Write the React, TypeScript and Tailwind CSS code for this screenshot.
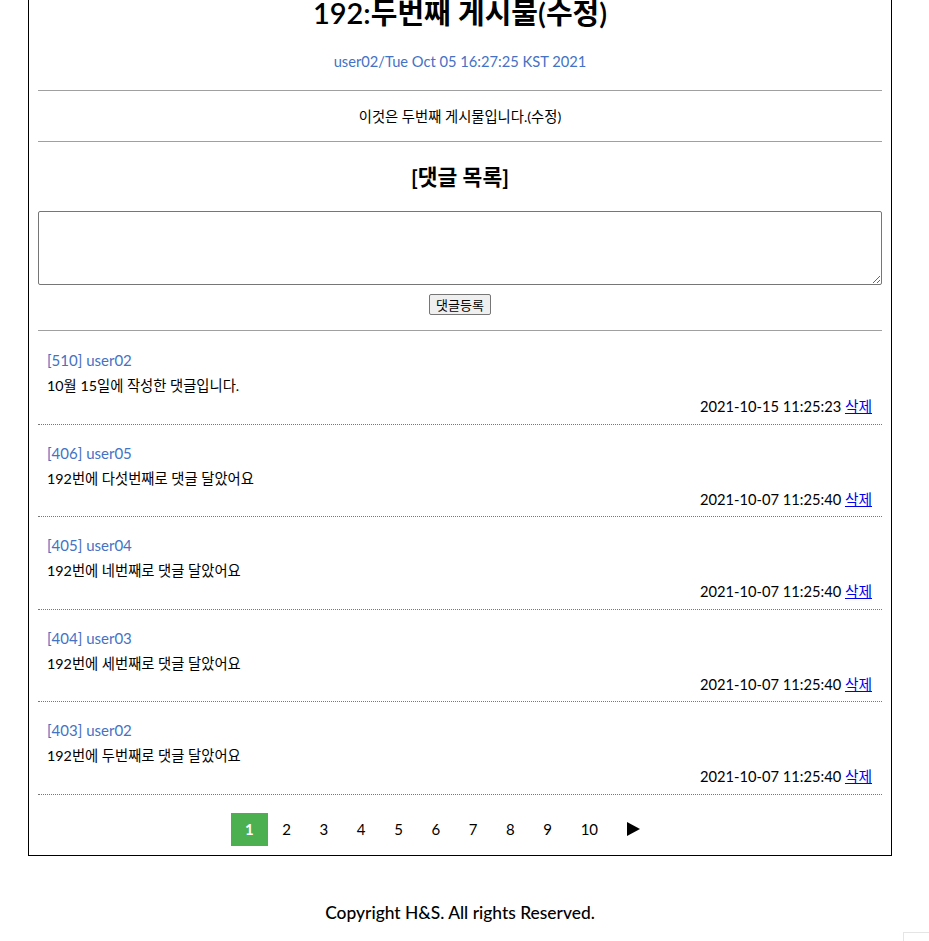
import React from "react";

const comments = [
  { no: 510, writer: "user02", content: "10월 15일에 작성한 댓글입니다.", date: "2021-10-15 11:25:23" },
  { no: 406, writer: "user05", content: "192번에 다섯번째로 댓글 달았어요", date: "2021-10-07 11:25:40" },
  { no: 405, writer: "user04", content: "192번에 네번째로 댓글 달았어요", date: "2021-10-07 11:25:40" },
  { no: 404, writer: "user03", content: "192번에 세번째로 댓글 달았어요", date: "2021-10-07 11:25:40" },
  { no: 403, writer: "user02", content: "192번에 두번째로 댓글 달았어요", date: "2021-10-07 11:25:40" },
];

const pages = [1, 2, 3, 4, 5, 6, 7, 8, 9, 10];

export default function App() {
  return (
    <div className="min-h-[941px] bg-white text-black font-['Lato','Noto_Sans_CJK_KR',sans-serif]">
      <div className="ml-[28px] w-[864px]">
        <div className="-mt-[26px] border border-black px-[9px] pb-[9px]">
          <h1 className="mt-[20px] text-center text-[29px] leading-[36px] font-semibold">192:두번째 게시물(수정)</h1>
          <div className="mt-[20px] text-center text-[14.7px] leading-[20px] text-[#4472c4]">
            user02/Tue Oct 05 16:27:25 KST 2021
          </div>
          <div className="mt-[19px] h-px bg-[#a0a0a0]" />
          <div className="mt-[15px] text-center text-[14.3px] leading-[22px]">이것은 두번째 게시물입니다.(수정)</div>
          <div className="mt-[13px] h-px bg-[#a0a0a0]" />
          <h2 className="mt-[21px] text-center text-[21.5px] leading-[28px] font-bold">[댓글 목록]</h2>
          <textarea className="mt-[20px] block h-[74px] w-full rounded-[2px] border border-[#767676] outline-none" />
          <div className="mt-[9px] flex justify-center">
            <button className="h-[21px] rounded-[2px] border border-[#767676] bg-[#efefef] px-[6px] text-[13px] leading-[19px] font-['Noto_Sans_CJK_KR',sans-serif]">
              댓글등록
            </button>
          </div>
          <div className="mt-[15px] h-px bg-[#a0a0a0]" />

          <ul className="mt-[1px]">
            {comments.map((c) => (
              <li key={c.no} className="border-b border-dotted border-[#777] pl-[9px] pr-[10px] pt-[16px] pb-[7.5px]">
                <div className="text-[15px] leading-[24px] text-[#4472c4]">
                  [{c.no}] {c.writer}
                </div>
                <div className="mt-[3px] text-[14.3px] leading-[22px]">{c.content}</div>
                <div className="-mt-[1px] text-right text-[14.7px] leading-[20px]">
                  {c.date} <a href="#" className="text-[#0000ee] underline">삭제</a>
                </div>
              </li>
            ))}
          </ul>

          <div className="mt-[18px] flex justify-center">
            <ul className="flex pr-[34px] text-[15px]">
              {pages.map((p) => (
                <li
                  key={p}
                  className={
                    p === 1
                      ? "flex h-[33px] items-center bg-[#4caf50] px-[14.3px] font-bold text-white"
                      : "flex h-[33px] items-center px-[14.3px] text-black"
                  }
                >
                  {p}
                </li>
              ))}
              <li className="flex h-[33px] items-center px-[15px]">
                <svg width="13" height="14" viewBox="0 0 13 14">
                  <path d="M0 0 L13 7 L0 14 Z" fill="black" />
                </svg>
              </li>
            </ul>
          </div>
        </div>

        <footer className="mt-[45px] text-center text-[17.4px] leading-[24px] font-medium">
          Copyright H&amp;S. All rights Reserved.
        </footer>
      </div>

      <div className="fixed bottom-0 right-0 h-[9px] w-[26px] border-l border-t border-[#e5e5e5] bg-white" />
    </div>
  );
}
